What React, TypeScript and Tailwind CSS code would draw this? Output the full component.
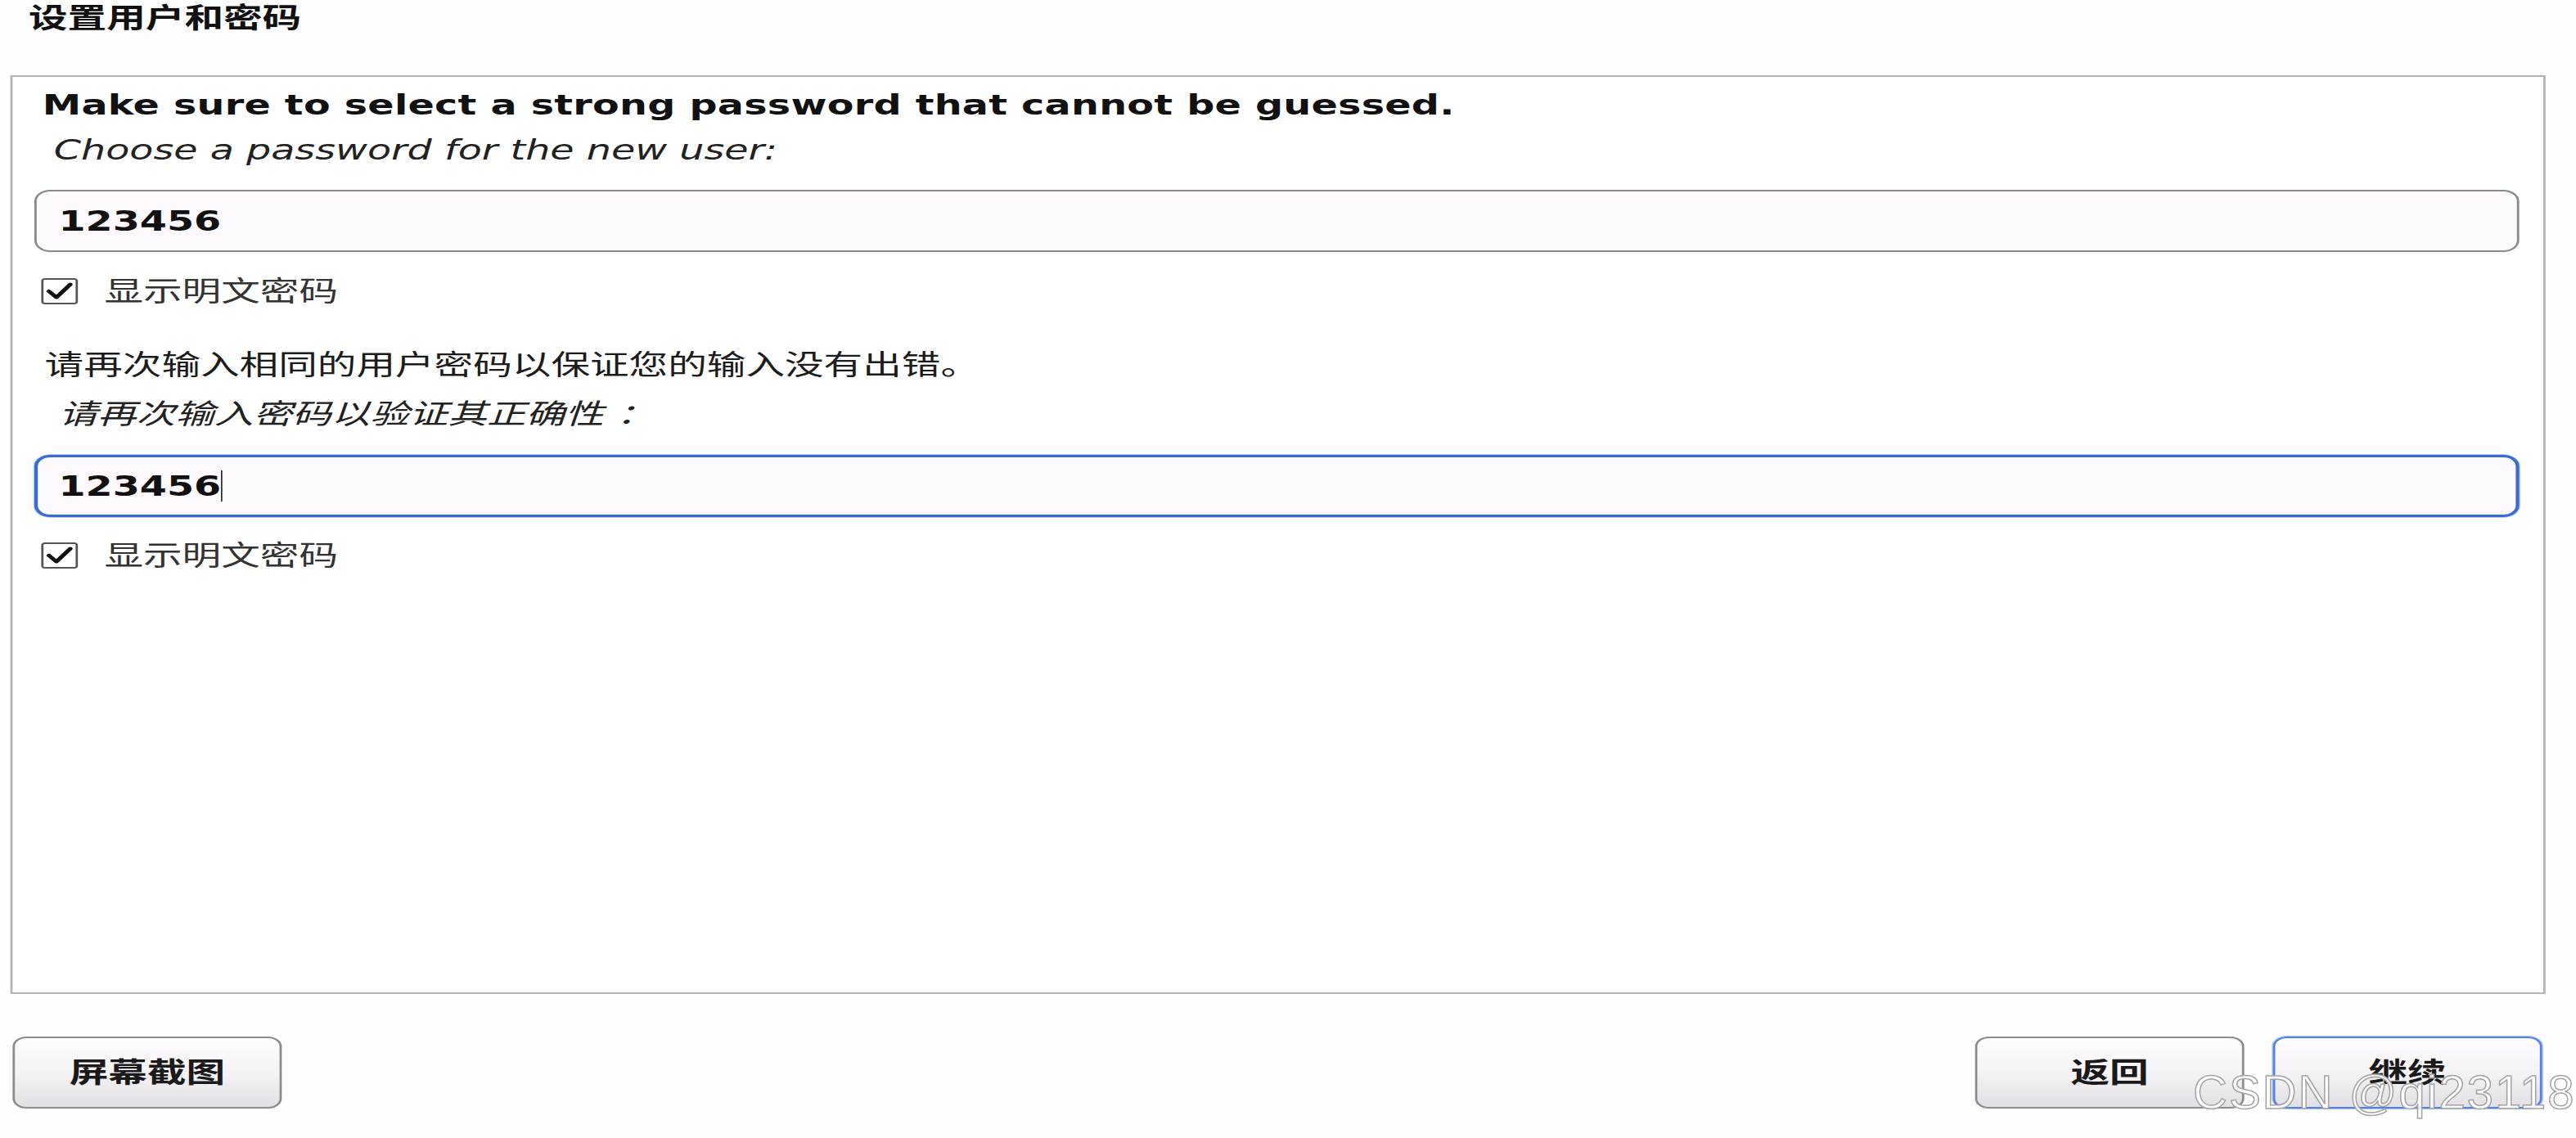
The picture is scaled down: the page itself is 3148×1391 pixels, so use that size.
import React from 'react';

// the reference screenshot is stretched sideways ~1.4x, so the page is laid out
// at 2249px and scaled on x to fill 3148px
const base = "font-['DejaVu_Sans','Noto_Sans_CJK_SC',sans-serif]";

const CheckBox = () => (
    <div className="w-[32px] h-[32px] border-2 border-[#555] rounded-[3px] bg-white flex items-center justify-center">
        <svg viewBox="0 0 28 28" className="w-[26px] h-[26px]">
            <path d="M4 14 L11 22 L24 5" fill="none" stroke="#111" strokeWidth="4.4" strokeLinecap="round" strokeLinejoin="round" />
        </svg>
    </div>
);

const ShowPassword = () => (
    <div className="flex items-center h-[32px] ml-[6px] gap-[23px]">
        <CheckBox />
        <span className="text-[34px] leading-[40px] text-[#333]">显示明文密码</span>
    </div>
);

const Entry = ({ focused }: { focused?: boolean }) => (
    <div
        className={
            focused
                ? "h-[76px] rounded-[14px] border-[3px] border-[#3a6ccf] bg-[#fdf9fd] flex items-center pl-[18px] shadow-[0_0_0_1px_#b8cdf2]"
                : "h-[76px] rounded-[14px] border-2 border-[#8a8a8a] bg-[#fdf9fd] flex items-center pl-[19px]"
        }
    >
        <span className="text-[34px] leading-[40px] font-bold text-[#111]">123456</span>
        {focused && <span className="inline-block w-[1.5px] h-[38px] bg-black" />}
    </div>
);

const Button = ({ label, focused }: { label: string; focused?: boolean }) => (
    <div
        className={
            focused
                ? "w-[235px] h-[88px] rounded-[12px] border-2 border-[#4f84e2] shadow-[0_0_0_1px_#a9c4f0] bg-linear-to-b from-[#fefcfe] via-[#f5f3f6] to-[#e2e0e4] flex items-center justify-center"
                : "w-[235px] h-[88px] rounded-[12px] border-2 border-[#8c8c8c] bg-linear-to-b from-[#fefcfe] via-[#f5f3f6] to-[#e2e0e4] flex items-center justify-center"
        }
    >
        <span className="text-[34px] leading-[40px] font-bold text-[#1a1a1a]">{label}</span>
    </div>
);

export default function App() {
    return (
        <div className={`relative w-[3148px] h-[1391px] overflow-hidden bg-[#fefefe] ${base}`}>
            <div className="w-[2249px] h-[1391px] origin-top-left scale-x-[1.4] flex flex-col">
                {/* Title */}
                <div className="h-[42px] flex items-center pl-[25px] pt-[2px]">
                    <h1 className="text-[34px] leading-[40px] font-bold text-[#111]">设置用户和密码</h1>
                </div>

                {/* Main panel */}
                <div className="mt-[50px] ml-[9px] w-[2213px] h-[1123px] border-2 border-[#b4b4b4] bg-white pl-[19px] pr-[21px] flex flex-col">
                    <p className="mt-[14px] ml-[7px] text-[34px] leading-[40px] font-bold tracking-[0.2px] text-[#111]">
                        Make sure to select a strong password that cannot be guessed.
                    </p>
                    <p className="mt-[15px] ml-[17px] text-[34px] leading-[40px] italic text-[#222]">
                        Choose a password for the new user:
                    </p>
                    <div className="mt-[29px]">
                        <Entry />
                    </div>
                    <div className="mt-[32px]">
                        <ShowPassword />
                    </div>
                    <p className="mt-[54px] ml-[9px] text-[34px] leading-[40px] text-[#1c1c1c]">
                        请再次输入相同的用户密码以保证您的输入没有出错。
                    </p>
                    <p className="mt-[20px] ml-[21px] text-[34px] leading-[40px] italic text-[#222]">
                        请再次输入密码以验证其正确性 ：
                    </p>
                    <div className="mt-[30px]">
                        <Entry focused />
                    </div>
                    <div className="mt-[31px]">
                        <ShowPassword />
                    </div>
                </div>

                {/* Bottom buttons */}
                <div className="mt-[52px] pl-[11px] pr-[30px] flex items-center justify-between">
                    <Button label="屏幕截图" />
                    <div className="flex items-center gap-[25px]">
                        <Button label="返回" />
                        <Button label="继续" focused />
                    </div>
                </div>
            </div>

            {/* watermark */}
            <div className="absolute left-[2680px] top-[1306px] whitespace-nowrap text-[58px] leading-[58px] tracking-[2px] font-['Liberation_Sans',sans-serif] text-white/90 [-webkit-text-stroke:1.5px_#a3a3a3]">
                CSDN @qi23118
            </div>
        </div>
    );
}
